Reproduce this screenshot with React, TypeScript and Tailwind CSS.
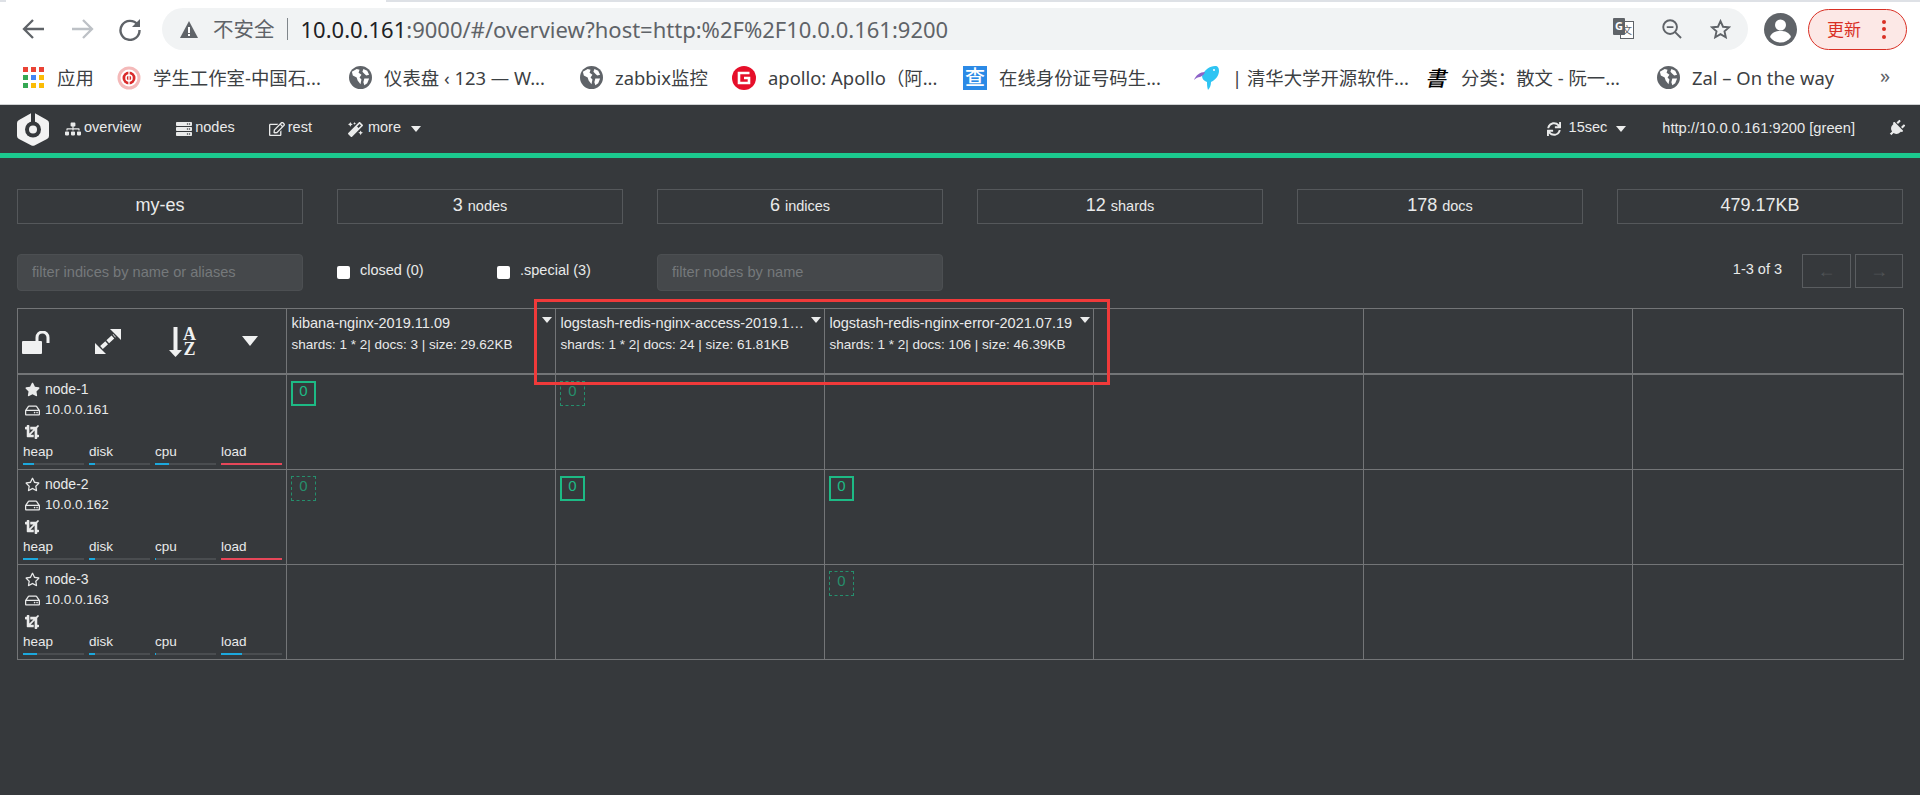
import React from "react";
import {
  FaSitemap, FaServer, FaRegEdit, FaMagic, FaSync, FaPlug,
  FaStar, FaRegStar, FaRegHdd, FaCrop,
} from "react-icons/fa";

const Caret = ({ big }: { big?: boolean }) =>
  big ? (
    <span className="block w-0 h-0 border-l-[8px] border-r-[8px] border-t-[10px] border-l-transparent border-r-transparent border-t-[#f0f1f1]" />
  ) : (
    <span className="block w-0 h-0 border-l-[5px] border-r-[5px] border-t-[6px] border-l-transparent border-r-transparent border-t-[#eceded]" />
  );

const Globe = () => (
  <svg width="23" height="23" viewBox="0 0 24 24">
    <circle cx="12" cy="12" r="12" fill="#5f6368" />
    <path d="M3 6l5-3 3 1-1 3 3 2-2 3 2 2-1 5-3-4-1-3-4-2zM15 3l4 2 2 4-3 1-2-2-2-2zM16 13l5 0-2 5-3 2-1-3z" fill="#fff" />
  </svg>
);

const Apps = () => {
  const c = ["#ea4335", "#ea4335", "#ea4335", "#34a853", "#4285f4", "#fbbc05", "#34a853", "#fbbc05", "#fbbc05"];
  return (
    <div className="grid grid-cols-3 gap-[3px] w-[21px]">
      {c.map((x, i) => (
        <svg key={i} width="5" height="5" viewBox="0 0 5 5"><rect width="5" height="5" fill={x} /></svg>
      ))}
    </div>
  );
};

const Seal = () => (
  <svg width="24" height="24" viewBox="0 0 24 24">
    <circle cx="12" cy="12" r="11.5" fill="#f4b9b9" />
    <circle cx="12" cy="12" r="8.5" fill="#fff" />
    <circle cx="12" cy="12" r="6.5" fill="#d92b2b" />
    <circle cx="12" cy="12" r="3" fill="none" stroke="#fff" strokeWidth="1.5" />
    <path d="M12 5v14" stroke="#fff" strokeWidth="1.3" />
  </svg>
);

const Apollo = () => (
  <svg width="24" height="24" viewBox="0 0 24 24">
    <circle cx="12" cy="12" r="12" fill="#e60f2a" />
    <path d="M17.5 7H7v10h10v-5h-5" fill="none" stroke="#fff" strokeWidth="2.6" />
  </svg>
);

const Cha = () => (
  <div className="w-[24px] h-[24px] bg-[#2b8ae6] text-white text-[20px] leading-[24px] text-center font-medium">查</div>
);

const Fish = () => (
  <svg width="25" height="24" viewBox="0 0 25 24">
    <path d="M8 10C10 4 16 0 21 0c3 0 4 2 4 5 0 5-4 9-8 11 0 3-1 6-3 8-1-3-1-6-1-8-3-1-5-3-5-6z" fill="#2ec4f3" />
    <path d="M0 14c2-5 6-8 11-8-1 3-3 4-5 5-2 0-4 1-6 3z" fill="#8d63c8" />
    <circle cx="20" cy="4" r="1" fill="#fff" />
  </svg>
);

const Shu = () => (
  <div className="w-[20px] h-[24px] text-[21px] leading-[24px] font-medium text-black -skew-x-12">書</div>
);

const bookmarks: { w: string; gap: string; icon: React.ReactNode; text: string }[] = [
  { w: "w-[94px]", gap: "gap-[13px]", icon: <Apps />, text: "应用" },
  { w: "w-[232px]", gap: "gap-[12px]", icon: <Seal />, text: "学生工作室-中国石..." },
  { w: "w-[231px]", gap: "gap-[12px]", icon: <Globe />, text: "仪表盘 ‹ 123 — W..." },
  { w: "w-[152px]", gap: "gap-[12px]", icon: <Globe />, text: "zabbix监控" },
  { w: "w-[231px]", gap: "gap-[12px]", icon: <Apollo />, text: "apollo: Apollo（阿..." },
  { w: "w-[231px]", gap: "gap-[12px]", icon: <Cha />, text: "在线身份证号码生..." },
  { w: "w-[233px]", gap: "gap-[13px]", icon: <Fish />, text: "| 清华大学开源软件..." },
  { w: "w-[230px]", gap: "gap-[14px]", icon: <Shu />, text: "分类：散文 - 阮一..." },
  { w: "w-[223px]", gap: "gap-[12px]", icon: <Globe />, text: "Zal – On the way" },
];

const ChromeBars = () => (
  <div className="bg-white font-['Noto_Sans','Noto_Sans_CJK_SC',sans-serif]">
    <div className="h-[2px] bg-[#dee1e6] flex"><div className="w-[380px] ml-[6px] bg-white" /></div>
    <div className="h-[48px] pt-[6px] flex items-center pl-[22px]">
      <svg width="24" height="24" viewBox="0 0 24 24" fill="none" stroke="#5f6368" strokeWidth="2.3"><path d="M22 12H3M11 3l-9 9 9 9" /></svg>
      <svg className="ml-[24px]" width="24" height="24" viewBox="0 0 24 24" fill="none" stroke="#bdc1c6" strokeWidth="2.3"><path d="M2 12h19M13 3l9 9-9 9" /></svg>
      <svg className="ml-[24px]" width="24" height="24" viewBox="0 0 24 24" fill="none" stroke="#5f6368" strokeWidth="2.4"><path d="M19.5 7.5A9.5 9.5 0 1 0 21.5 13" /><path d="M22 2v8h-8z" fill="#5f6368" stroke="none" /></svg>
      <div className="ml-[20px] w-[1586px] h-[42px] rounded-full bg-[#f1f3f4] flex items-center pl-[18px]">
        <svg width="18" height="17" viewBox="0 0 18 17"><path d="M9 0l9 17H0z" fill="#5f6368" /><rect x="8" y="6" width="2" height="6" fill="#fff" /><rect x="8" y="13" width="2" height="2" fill="#fff" /></svg>
        <span className="ml-[15px] text-[20.5px] text-[#5f6368] leading-none">不安全</span>
        <span className="ml-[12px] w-[1px] h-[22px] bg-[#80868b]" />
        <span className="ml-[13px] text-[22px] leading-none text-[#202124] whitespace-nowrap">10.0.0.161<span className="text-[#5f6368]">:9000/#/overview?host=http:%2F%2F10.0.0.161:9200</span></span>
        <div className="ml-auto flex items-center mr-[17px] gap-[28px]">
          <div className="relative w-[21px] h-[22px]">
            <div className="absolute left-[7px] top-[3px] w-[14px] h-[18px] border border-[#5f6368] bg-white text-[10px] leading-[16px] text-center text-[#5f6368]">文</div>
            <div className="absolute left-0 top-0 w-[12px] h-[17px] bg-[#5f6368] rounded-[1px] text-[11px] leading-[16px] text-center font-bold text-white">G</div>
          </div>
          <svg width="20" height="20" viewBox="0 0 21 21" fill="none" stroke="#5f6368" strokeWidth="2"><circle cx="8.5" cy="8.5" r="7.2" /><path d="M5 8.5h7M13.5 13.5l6.5 6.5" /></svg>
          <svg width="21" height="20" viewBox="0 0 24 23" fill="none" stroke="#5f6368" strokeWidth="2.2"><path d="M12 2.500l2.900 6.400 6.900.7-5.200 4.600 1.500 6.800-6.100-3.500-6.100 3.500 1.500-6.800L2.200 9.600l6.900-.7z" /></svg>
        </div>
      </div>
      <svg className="ml-[16px]" width="33" height="33" viewBox="0 0 33 33"><circle cx="16.5" cy="16.5" r="16.5" fill="#5f6368" /><circle cx="16.5" cy="12" r="5.5" fill="#fff" /><path d="M6 24c2-5 6-6 10.500-6s8.500 1 10.500 6c-2.500 3.500-6 5.500-10.500 5.500S8.500 27.500 6 24z" fill="#fff" /></svg>
      <div className="ml-[11px] w-[99px] h-[41px] rounded-full border-[1.5px] border-[#d93025] bg-[#fce8e6] flex items-center pl-[18px]">
        <span className="text-[17px] text-[#d93025] leading-none">更新</span>
        <span className="ml-[21px] flex flex-col gap-[3.500px]">
          <span className="w-[4px] h-[4px] rounded-full bg-[#d93025]" />
          <span className="w-[4px] h-[4px] rounded-full bg-[#d93025]" />
          <span className="w-[4px] h-[4px] rounded-full bg-[#d93025]" />
        </span>
      </div>
    </div>
    <div className="h-[54px] pt-[1px] flex items-center pl-[23px]">
      {bookmarks.map((b) => (
        <div key={b.text} className={`${b.w} ${b.gap} flex items-center shrink-0`}>
          <span className="shrink-0">{b.icon}</span>
          <span className="mt-[1px] text-[18.400px] text-[#3c4043] whitespace-nowrap leading-none">{b.text}</span>
        </div>
      ))}
      <span className="text-[20px] leading-none text-[#5f6368] -mt-[4px]">»</span>
    </div>
    <div className="h-[1px] bg-[#d0d2d4]" />
  </div>
);

const Logo = () => (
  <svg width="32" height="34" viewBox="0 0 32 34">
    <path d="M14 1.200 L2 8 Q0 9 0 11 L0 24 Q0 26 2 27 L14.500 33.500 Q16 34 17.500 33.500 L30 27 Q32 26 32 24 L32 11 Q32 9 30 8 L18 1.200 L18 10 L14 10 Z" fill="#f2f2f2" />
    <circle cx="16" cy="17.500" r="8" fill="#36393c" />
    <circle cx="16" cy="17.500" r="4" fill="#f2f2f2" />
  </svg>
);

const NavItem = ({ icon, label, className }: { icon: React.ReactNode; label: string; className: string }) => (
  <div className={`flex items-center gap-[3px] ${className}`}>
    {icon}
    <span className="-mt-[2px]">{label}</span>
  </div>
);

const Nav = () => (
  <div className="h-[48px] flex items-center pl-[17px] pr-[15px] text-[#e9eaea] text-[14.500px]">
    <Logo />
    <NavItem className="ml-[16px]" icon={<FaSitemap size={16} />} label="overview" />
    <NavItem className="ml-[35px]" icon={<FaServer size={16} />} label="nodes" />
    <NavItem className="ml-[34px]" icon={<FaRegEdit size={16} />} label="rest" />
    <NavItem className="ml-[36px] gap-[5px]" icon={<FaMagic size={15} />} label="more" />
    <span className="ml-[10px]"><Caret /></span>
    <div className="ml-auto flex items-center">
      <FaSync size={14} />
      <span className="ml-[8px] -mt-[2px]">15sec</span>
      <span className="ml-[9px]"><Caret /></span>
      <span className="ml-[36px] -mt-[2px] text-[14.700px]">http://10.0.0.161:9200 [green]</span>
      <FaPlug size={17} className="ml-[33px] rotate-45" />
    </div>
  </div>
);

const Stat = ({ big, small }: { big: string; small?: string }) => (
  <div className="h-[35px] border border-[#55585b] text-center text-[#e9eaea] text-[18px] leading-[31px]">
    <span>{big}</span>
    {small && <span className="ml-[5px] text-[14.500px]">{small}</span>}
  </div>
);

const Filter = ({ ph }: { ph: string }) => (
  <input
    readOnly
    placeholder={ph}
    className="h-[37px] w-full rounded-[4px] bg-[#45484b] border border-[#4c4f52] px-[14px] pb-[2px] text-[14.600px] outline-none placeholder:text-[#75797b]"
  />
);

const Check = ({ label, className }: { label: string; className: string }) => (
  <label className={`flex items-center text-[14.500px] text-[#e9eaea] ${className}`}>
    <input type="checkbox" className="appearance-none w-[13px] h-[13px] bg-white rounded-[2px]" />
    <span className="ml-[10px] -mt-[3px]">{label}</span>
  </label>
);

const UnlockIcon = () => (
  <svg width="28" height="23" viewBox="0 0 28 23" fill="#f0f1f1">
    <rect x="0" y="10" width="20" height="13" rx="1" />
    <path d="M15 11V6.500a5.500 5.500 0 0 1 11 0V12" fill="none" stroke="#f0f1f1" strokeWidth="3" />
  </svg>
);

const ExpandIcon = () => (
  <svg width="26" height="25" viewBox="0 0 26 25" fill="#f0f1f1">
    <polygon points="15,0 26,0 26,11" />
    <polygon points="0,14 0,25 11,25" />
    <path d="M6.500 18.500L19.500 6.500" stroke="#f0f1f1" strokeWidth="4" strokeDasharray="7 1.500" />
  </svg>
);

const SortIcon = () => (
  <div className="flex items-center w-[27px] h-[30px]">
    <svg width="13" height="30" viewBox="0 0 13 30" fill="#f0f1f1" className="shrink-0">
      <rect x="4.500" y="0" width="4" height="24" />
      <polygon points="0,23 13,23 6.500,30" />
    </svg>
    <div className="ml-[1px] font-['Liberation_Serif',serif] font-bold text-[18px] leading-[15px] text-[#f0f1f1] text-center">
      <div>A</div>
      <div>Z</div>
    </div>
  </div>
);

const cell = "border-r border-b border-[#737577] min-w-0";

const IndexHead = ({ name, stats }: { name: string; stats: string }) => (
  <div className={`${cell} border-b-2 relative pl-[4.500px] pt-[4px] leading-[21px]`}>
    <div className="whitespace-nowrap text-[14.500px] text-[#e9eaea]">{name}</div>
    <div className="whitespace-nowrap text-[13.500px] text-[#e9eaea]">{stats}</div>
    <span className="absolute right-[3px] top-[8px]"><Caret /></span>
  </div>
);

const Bar = ({ label, pct, color }: { label: string; pct: number; color: string }) => (
  <div className="w-[61px] shrink-0">
    <div className="text-[13.500px] leading-[16px]">{label}</div>
    <div className="mt-[3px] h-[2px] bg-[#4a4d50]">
      <div className={`h-full ${color}`} style={{ width: `${pct}%` }} />
    </div>
  </div>
);

const blue = "bg-[#1ca8dd]";
const red = "bg-[#e64759]";

const NodeCell = ({ name, ip, master, bars }: { name: string; ip: string; master: boolean; bars: [number, number, number, number, boolean] }) => (
  <div className={`${cell} h-[95px] pl-[5px] pt-[4px] text-[#e9eaea]`}>
    <div className="pl-[2px] flex items-center h-[21px] text-[14px]">
      {master ? <FaStar size={15} /> : <FaRegStar size={15} />}
      <span className="ml-[5px]">{name}</span>
    </div>
    <div className="pl-[2px] flex items-center h-[21px] text-[13.500px]">
      <FaRegHdd size={15} />
      <span className="ml-[5px]">{ip}</span>
    </div>
    <div className="pl-[2px] flex items-center h-[21px]"><FaCrop size={14} /></div>
    <div className="flex gap-[5px] mt-[2px]">
      <Bar label="heap" pct={bars[0]} color={blue} />
      <Bar label="disk" pct={bars[1]} color={blue} />
      <Bar label="cpu" pct={bars[2]} color={blue} />
      <Bar label="load" pct={bars[3]} color={bars[4] ? red : blue} />
    </div>
  </div>
);

const Shard = ({ kind }: { kind?: "solid" | "dashed" }) => (
  <div className={`${cell} h-[95px] pl-[4px] pt-[6px]`}>
    {kind === "solid" && (
      <div className="w-[25px] h-[25px] border-2 border-[#1bc98e] text-[#1bc98e] text-[15px] leading-[16px] text-center opacity-90">0</div>
    )}
    {kind === "dashed" && (
      <div className="w-[25px] h-[25px] border border-dashed border-[#1bc98e]/60 text-[#1bc98e]/60 text-[15px] leading-[18px] text-center">0</div>
    )}
  </div>
);

const rows: { name: string; ip: string; master: boolean; bars: [number, number, number, number, boolean]; shards: ("solid" | "dashed" | undefined)[] }[] = [
  { name: "node-1", ip: "10.0.0.161", master: true, bars: [18, 10, 23, 100, true], shards: ["solid", "dashed", undefined] },
  { name: "node-2", ip: "10.0.0.162", master: false, bars: [25, 10, 2, 100, true], shards: ["dashed", "solid", "solid"] },
  { name: "node-3", ip: "10.0.0.163", master: false, bars: [23, 10, 2, 34, false], shards: [undefined, undefined, "dashed"] },
];

const Table = () => (
  <div className="relative mt-[17px] mx-[17px] border-l border-t border-[#737577] grid grid-cols-[269px_269px_269px_269px_270px_269px_271px] text-[#e9eaea]">
    <div className={`${cell} border-b-2 h-[66px] flex items-center`}>
      <span className="ml-[4px] mt-[2px]"><UnlockIcon /></span>
      <span className="ml-[45px] mt-[1px]"><ExpandIcon /></span>
      <span className="ml-[48px] mt-[1px]"><SortIcon /></span>
      <span className="ml-[46px]"><Caret big /></span>
    </div>
    <IndexHead name="kibana-nginx-2019.11.09" stats="shards: 1 * 2| docs: 3 | size: 29.62KB" />
    <IndexHead name="logstash-redis-nginx-access-2019.1…" stats="shards: 1 * 2| docs: 24 | size: 61.81KB" />
    <IndexHead name="logstash-redis-nginx-error-2021.07.19" stats="shards: 1 * 2| docs: 106 | size: 46.39KB" />
    <div className={`${cell} border-b-2`} />
    <div className={`${cell} border-b-2`} />
    <div className={`${cell} border-b-2`} />
    {rows.map((r) => (
      <React.Fragment key={r.name}>
        <NodeCell name={r.name} ip={r.ip} master={r.master} bars={r.bars} />
        {r.shards.map((s, i) => <Shard key={i} kind={s} />)}
        <div className={cell} />
        <div className={cell} />
        <div className={cell} />
      </React.Fragment>
    ))}
    <div className="absolute left-[516px] -top-[10px] w-[576px] h-[86px] border-[3px] border-[#f03a3a] pointer-events-none" />
  </div>
);

export default function App() {
  return (
    <div className="min-h-[795px] bg-[#36393c] font-['Liberation_Sans',Arial,'Noto_Sans_CJK_SC',sans-serif]">
      <ChromeBars />
      <Nav />
      <div className="h-[5px] bg-[#1bc98e]" />
      <div className="mt-[31px] mx-[17px] grid grid-cols-6 gap-x-[34px]">
        <Stat big="my-es" />
        <Stat big="3" small="nodes" />
        <Stat big="6" small="indices" />
        <Stat big="12" small="shards" />
        <Stat big="178" small="docs" />
        <Stat big="479.17KB" />
      </div>
      <div className="mt-[30px] mx-[17px] grid grid-cols-6 gap-x-[34px]">
        <Filter ph="filter indices by name or aliases" />
        <div className="flex h-[37px]">
          <Check className="w-[160px]" label="closed (0)" />
          <Check className="" label=".special (3)" />
        </div>
        <Filter ph="filter nodes by name" />
        <div className="col-span-3 flex justify-end h-[34px] items-center text-[14.500px] text-[#e9eaea]">
          <span className="mr-[20px] -mt-[3px]">1-3 of 3</span>
          <div className="w-[49px] h-[34px] border border-[#5a5d60] text-[18px] text-[#505356] flex items-center justify-center">←</div>
          <div className="ml-[4px] w-[48px] h-[34px] border border-[#5a5d60] text-[18px] text-[#505356] flex items-center justify-center">→</div>
        </div>
      </div>
      <Table />
    </div>
  );
}
